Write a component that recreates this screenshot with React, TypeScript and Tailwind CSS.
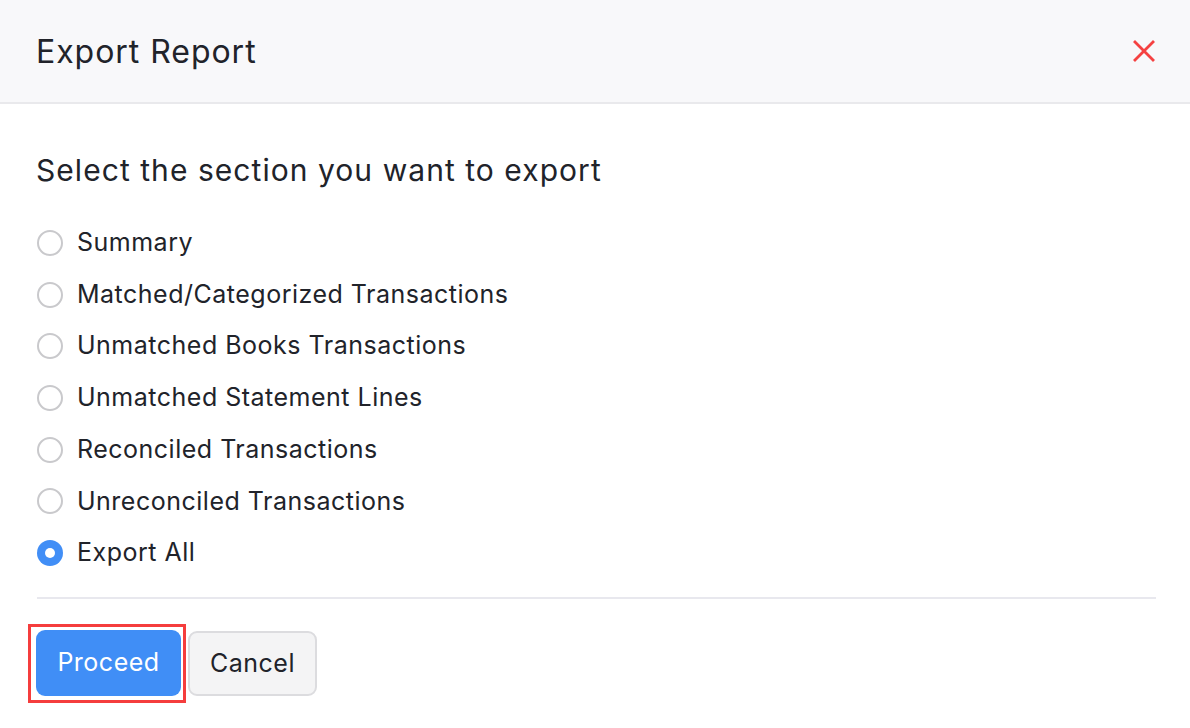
import React, { useState } from 'react';

const OPTIONS = [
  'Summary',
  'Matched/Categorized Transactions',
  'Unmatched Books Transactions',
  'Unmatched Statement Lines',
  'Reconciled Transactions',
  'Unreconciled Transactions',
  'Export All',
];

export default function App() {
  const [selected, setSelected] = useState('Export All');

  return (
    <div className="w-[1190px] h-[728px] bg-white text-[#21232a] overflow-hidden" style={{ fontFamily: 'Inter, "Noto Sans", sans-serif' }}>
      {/* Header */}
      <div className="h-[104px] bg-[#f8f8fa] border-b-2 border-[#e9e9ec] flex items-center justify-between pl-[36px] pr-[35px]">
        <h1 className="text-[32px] font-normal tracking-[0.03em] pt-[1px]">Export Report</h1>
        <button className="text-[#f54141] w-[22px] h-[22px] flex items-center justify-center">
          <svg width="22" height="22" viewBox="0 0 22 22" fill="none" stroke="currentColor" strokeWidth="2.8" strokeLinecap="square">
            <path d="M2 2 L20 20 M20 2 L2 20" />
          </svg>
        </button>
      </div>

      {/* Body */}
      <div className="px-[37px] pt-[46px]">
        <p className="text-[30px] leading-[40px] tracking-[0.035em] -ml-[1px]">Select the section you want to export</p>

        <div className="mt-[27px] flex flex-col">
          {OPTIONS.map(opt => {
            const on = opt === selected;
            return (
              <label key={opt} className="h-[51.7px] flex items-center gap-[14px] cursor-pointer" onClick={() => setSelected(opt)}>
                {on ? (
                  <span className="w-[26px] h-[26px] rounded-full bg-[#418ef6] flex items-center justify-center">
                    <span className="w-[10px] h-[10px] rounded-full bg-white" />
                  </span>
                ) : (
                  <span className="w-[26px] h-[26px] rounded-full border-2 border-[#c9c9cc] bg-white" />
                )}
                <span className="text-[25px] tracking-[0.02em]">{opt}</span>
              </label>
            );
          })}
        </div>

        <div className="mt-[18px] h-[2px] bg-[#e8e8ee] w-[1119px]" />

        <div className="mt-[25px] flex items-start gap-[2px] -ml-[9px]">
          <div className="border-[3px] border-[#f53d3d] pl-[5px] pr-[2px] pt-[3px] pb-[4px]">
            <button className="w-[145px] h-[66px] rounded-[9px] bg-[#408ef6] text-white text-[25px] tracking-[0.02em] flex items-center justify-center">
              Proceed
            </button>
          </div>
          <button className="mt-[7px] w-[129px] h-[65px] rounded-[9px] bg-[#f4f4f5] border-2 border-[#dcdcdf] text-[25px] tracking-[0.02em] text-[#21232a]">
            Cancel
          </button>
        </div>
      </div>
    </div>
  );
}
